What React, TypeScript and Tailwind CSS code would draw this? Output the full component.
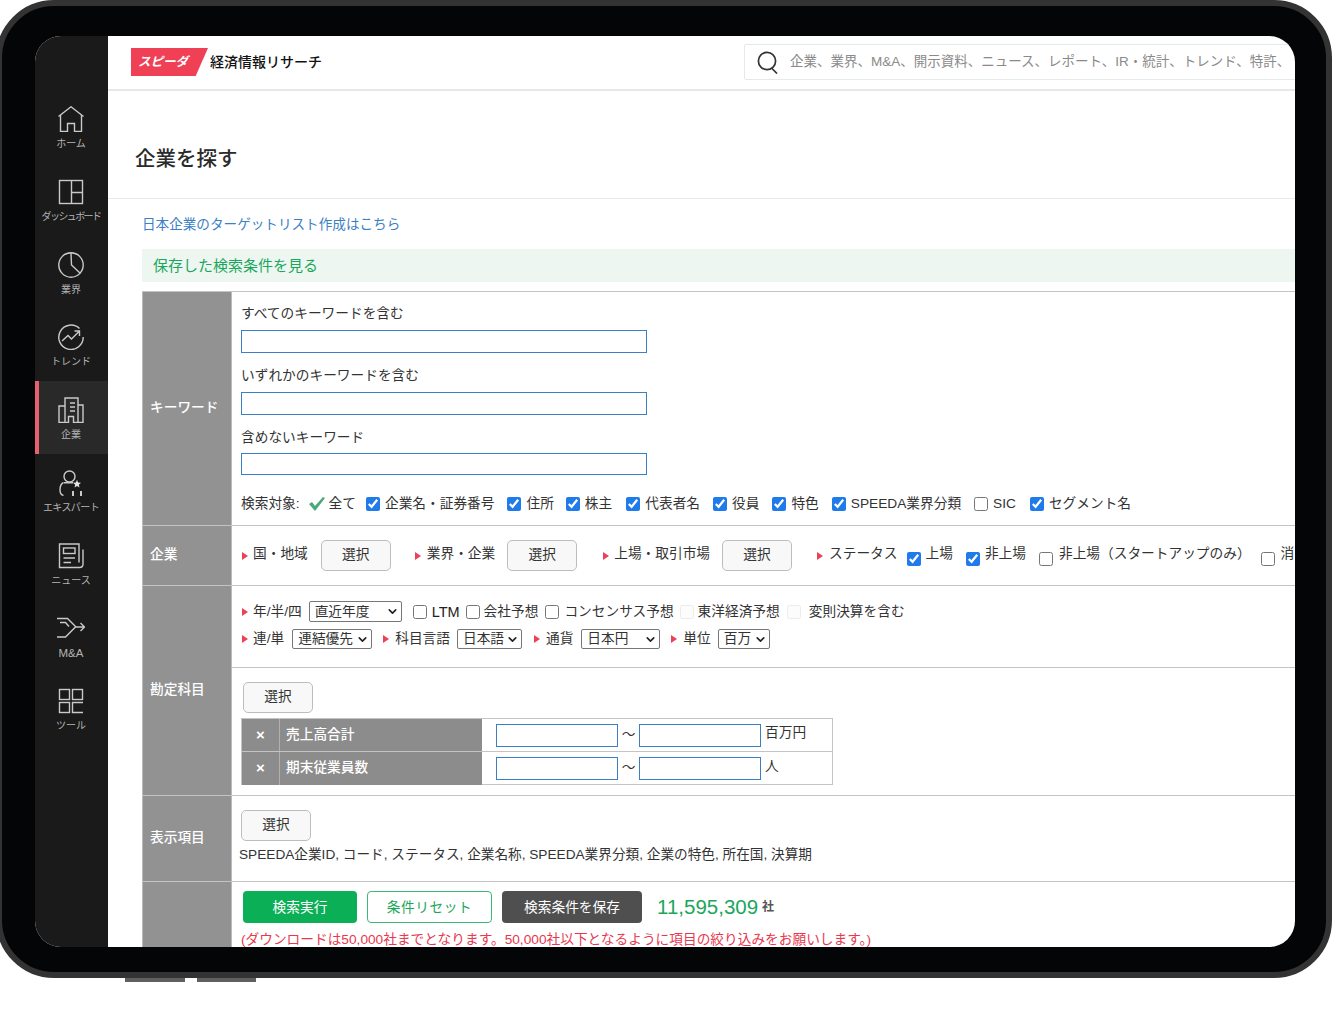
import React from 'react';
import { ChevronDown } from 'lucide-react';

function NavIcon({ name }: { name: string }) {
  const p = { fill: 'none', stroke: '#c9c9c9', strokeWidth: 1.4 };
  if (name === 'home') return (
    <svg width="26" height="26" viewBox="0 0 26 26" {...p}>
      <path d="M0.5 10.5 L13 0.8 L25.5 10.5" />
      <path d="M2.5 9 V25.5 H9.5 V17.5 H16.5 V25.5 H23.5 V9" />
    </svg>
  );
  if (name === 'dash') return (
    <svg width="26" height="26" viewBox="0 0 26 26" {...p}>
      <rect x="1.5" y="1.5" width="23" height="23" />
      <path d="M13.5 1.5 V24.5 M13.5 13.5 H24.5" />
    </svg>
  );
  if (name === 'pie') return (
    <svg width="26" height="26" viewBox="0 0 26 26" {...p}>
      <circle cx="13" cy="13" r="12.2" />
      <path d="M13 1 L13.5 13 L22.5 21.5" />
    </svg>
  );
  if (name === 'trend') return (
    <svg width="26" height="26" viewBox="0 0 26 26" {...p}>
      <path d="M21.5 4.5 A12.2 12.2 0 1 0 25.2 13" />
      <path d="M4 17 L10 11.5 L13.5 15 L21 7.5 M16.5 7 H21.5 V12" />
    </svg>
  );
  if (name === 'building') return (
    <svg width="26" height="26" viewBox="0 0 26 26" {...p}>
      <path d="M7 25.5 V1 H20 V25.5" />
      <path d="M7 9 H1 V25.5 H10.5 V19.5 H15.5 V25.5 H25 V8 H20" />
      <path d="M12 6 H17 M12 10 H17 M12 14 H17" />
    </svg>
  );
  if (name === 'expert') return (
    <svg width="26" height="26" viewBox="0 0 26 26" {...p}>
      <circle cx="11.5" cy="6.5" r="5.5" />
      <path d="M5.5 12.5 C2 14 2 17 2 20 C2 22.5 3.5 25 5.5 25.5 M6 12.8 H15" />
      <path d="M15 26 V21 M23 26 V21" strokeWidth="2" />
      <polygon points="19,9.8 20.1,12.6 23,12.8 20.8,14.7 21.5,17.5 19,16 16.5,17.5 17.2,14.7 15,12.8 17.9,12.6" fill="#e6e6e6" stroke="none" />
    </svg>
  );
  if (name === 'news') return (
    <svg width="26" height="26" viewBox="0 0 26 26" {...p}>
      <path d="M21 19.5 V1 H1.5 V24.5 H21.5 C23.5 24.5 25 23 25 21 V6.5" />
      <rect x="5.5" y="5" width="11.5" height="5.5" />
      <path d="M5.5 15 H17 M5.5 19.5 H13" />
    </svg>
  );
  if (name === 'ma') return (
    <svg width="28" height="22" viewBox="0 0 28 22" {...p}>
      <path d="M0 1.5 H10.5 L19 10 M3 5.5 H8.5 L12 9.5" />
      <path d="M0 20 H8.5 L18.5 10 H27.5 M23.5 6 L27.5 10 L23.5 14" />
    </svg>
  );
  return (
    <svg width="26" height="26" viewBox="0 0 26 26" {...p}>
      <rect x="1.5" y="1.5" width="10" height="10" />
      <rect x="14.5" y="1.5" width="10" height="10" />
      <rect x="1.5" y="14.5" width="10" height="10" />
      <path d="M25 14.5 H14.5 V24.5 H25" />
    </svg>
  );
}

const navItems = [
  { icon: 'home', label: 'ホーム' },
  { icon: 'dash', label: 'ダッシュボード' },
  { icon: 'pie', label: '業界' },
  { icon: 'trend', label: 'トレンド' },
  { icon: 'building', label: '企業', active: true },
  { icon: 'expert', label: 'エキスパート' },
  { icon: 'news', label: 'ニュース' },
  { icon: 'ma', label: 'M&A' },
  { icon: 'tools', label: 'ツール' },
];

function Tri({ className = '' }: { className?: string }) {
  return (
    <svg width="6" height="8" viewBox="0 0 6 8" className={`shrink-0 ${className}`}>
      <polygon points="0,0 6,4 0,8" fill="#ee4056" />
    </svg>
  );
}

function Check({ on = false, off = false, className = '' }: { on?: boolean; off?: boolean; className?: string }) {
  return (
    <input
      type="checkbox"
      defaultChecked={on}
      disabled={off}
      className={`w-[14px] h-[14px] m-0 shrink-0 accent-[#1f7aeb] ${off ? 'opacity-40' : ''} ${className}`}
    />
  );
}

function PickButton({ className = '' }: { className?: string }) {
  return (
    <button className={`w-[70px] h-[31px] shrink-0 rounded-[5px] border border-[#bdbdbd] bg-[#f8f8f8] text-[13.7px] text-[#333] ${className}`}>
      選択
    </button>
  );
}

function Sel({ value, width, height = 'h-[20px]', className = '' }: { value: string; width: string; height?: string; className?: string }) {
  return (
    <div className={`relative shrink-0 ${width} ${height} ${className}`}>
      <select className="appearance-none w-full h-full border border-[#777] rounded-[2px] bg-white pl-[5px] text-[13.7px] leading-none text-[#333]">
        <option>{value}</option>
      </select>
      <ChevronDown size={13} strokeWidth={3} className="absolute right-[3px] top-[4px] text-[#222] pointer-events-none" />
    </div>
  );
}

function KeywordField({ label, labelClass, inputClass }: { label: string; labelClass: string; inputClass: string }) {
  return (
    <>
      <div className={`leading-[20px] ${labelClass}`}>{label}</div>
      <input className={`block w-[406px] border border-[#3b7fc4] bg-white ${inputClass}`} />
    </>
  );
}

function Row({ label, className, children }: { label?: string; className: string; children: React.ReactNode }) {
  return (
    <div className={`flex border-b border-[#c4c4c4] ${className}`}>
      <div className="w-[90px] shrink-0 flex items-center pl-[7px] bg-[#929292] border-l border-[#bbbbbb] border-r text-white font-medium">
        {label}
      </div>
      <div className="flex-1 min-w-0 pl-[9px]">{children}</div>
    </div>
  );
}

function Target({ label, on = true, className = '' }: { label: string; on?: boolean; className?: string }) {
  return (
    <>
      <Check on={on} className={className} />
      <span className="ml-[5px]">{label}</span>
    </>
  );
}

function RangeRow({ label, unit, last = false }: { label: string; unit: string; last?: boolean }) {
  return (
    <div className={`flex h-[33px] ${last ? '' : 'border-b border-[#c4c4c4]'}`}>
      <div className="w-[38px] shrink-0 flex items-center justify-center bg-[#8c8c8c] border-r border-[#b0b0b0] text-[15px] text-white font-bold">×</div>
      <div className="w-[202px] shrink-0 flex items-center pl-[6px] bg-[#8c8c8c] text-white font-medium">{label}</div>
      <div className="flex-1 flex items-center pl-[14px]">
        <input className="w-[122px] h-[23px] border border-[#3b7fc4] bg-white" />
        <span className="w-[21px] text-center">〜</span>
        <input className="w-[122px] h-[23px] border border-[#3b7fc4] bg-white" />
        <span className="ml-[4px] -mt-[3px]">{unit}</span>
      </div>
    </div>
  );
}

export default function App() {
  return (
    <div className="w-[1340px] h-[1028px] overflow-hidden bg-white text-[13.7px] text-[#333] [font-family:'Liberation_Sans','Noto_Sans_CJK_JP',sans-serif]">
      <div className="-ml-[4px] w-[1336px] h-[978px] rounded-[58px] border-[6px] border-[#333333] bg-[#040507] pt-[30px] pl-[33px] pr-[31px] pb-[25px]">
        <div className="flex h-full rounded-[26px] overflow-hidden bg-white">
          {/* sidebar */}
          <div className="w-[73px] shrink-0 bg-[#1a1a1a] pt-[54px]">
            {navItems.map(item => (
              <div
                key={item.label}
                className={`h-[72.75px] flex flex-col items-center pt-[16px] ${item.active ? 'bg-[#292929] border-l-[4px] border-[#e8606f] pr-[5px]' : 'pr-[1px]'}`}
              >
                <div className="h-[26px] flex items-center justify-center"><NavIcon name={item.icon} /></div>
                <div className={`mt-[6px] leading-[12px] whitespace-nowrap text-[#b4b4b4] ${item.label === 'M&A' ? 'text-[11.5px]' : 'text-[10px]'} ${item.label === 'ダッシュボード' ? 'tracking-[-1.6px]' : item.label === 'エキスパート' ? 'tracking-[-0.6px]' : ''}`}>
                  {item.label}
                </div>
              </div>
            ))}
          </div>

          {/* main */}
          <div className="flex-1 min-w-0 overflow-hidden">
            <div className="h-[55px] flex items-center border-b-2 border-[#e6e8e8]">
              <div className="ml-[23px] -mt-[1px] w-[77px] h-[28px] shrink-0 flex items-center pl-[7px] bg-[#ef4056] [clip-path:polygon(0_0,100%_0,84%_100%,0_100%)] text-white text-[12.5px] font-bold italic">
                スピーダ
              </div>
              <div className="ml-[2px] shrink-0 text-[14px] font-medium text-[#111] whitespace-nowrap">経済情報リサーチ</div>
              <div className="ml-[422px] -mt-[1px] w-[560px] h-[36px] shrink-0 flex items-center border border-[#e4e9e9] rounded-[2px] pl-[12px] overflow-hidden">
                <svg width="23" height="23" viewBox="0 0 23 23" fill="none" stroke="#333" strokeWidth="1.7" className="shrink-0">
                  <circle cx="10" cy="10" r="8.6" />
                  <path d="M14.5 17 L20 22.5" />
                </svg>
                <span className="ml-[10px] pt-[1px] text-[13.5px] text-[#8a8a8a] whitespace-nowrap">企業、業界、M&amp;A、開示資料、ニュース、レポート、IR・統計、トレンド、特許、</span>
              </div>
            </div>

            <div className="h-[108px] flex items-center pl-[27px] pt-[30px] border-b border-[#e8eaea] text-[20.5px] font-medium text-[#2b2b2b]">
              企業を探す
            </div>

            <div className="pl-[34px]">
              <div className="h-[50px] pt-[2px] flex items-center text-[13.6px] text-[#3b7fc4] whitespace-nowrap">日本企業のターゲットリスト作成はこちら</div>
              <div className="h-[33px] pt-[1px] flex items-center pl-[11px] bg-[#eef6f2] text-[15px] text-[#1aa75c]">保存した検索条件を見る</div>

              <div className="mt-[9px] border-t border-[#c4c4c4]">
                <Row label="キーワード" className="h-[234px]">
                  <KeywordField label="すべてのキーワードを含む" labelClass="mt-[12px]" inputClass="mt-[6px] h-[23px]" />
                  <KeywordField label="いずれかのキーワードを含む" labelClass="mt-[13px]" inputClass="mt-[6px] h-[23px]" />
                  <KeywordField label="含めないキーワード" labelClass="mt-[13px]" inputClass="mt-[5px] h-[22px]" />
                  <div className="mt-[19px] h-[20px] flex items-center whitespace-nowrap">
                    <span>検索対象:</span>
                    <svg width="18" height="16" viewBox="0 0 18 16" className="ml-[8px]">
                      <path d="M1 8 L4 6 L7 10 L15 1 L17 2 L7 15 Z" fill="#4aa879" />
                    </svg>
                    <span className="ml-[3px]">全て</span>
                    <Target label="企業名・証券番号" on className="ml-[10px]" />
                    <Target label="住所" className="ml-[13px]" />
                    <Target label="株主" className="ml-[12px]" />
                    <Target label="代表者名" className="ml-[14px]" />
                    <Target label="役員" className="ml-[13px]" />
                    <Target label="特色" className="ml-[13px]" />
                    <Target label="SPEEDA業界分類" className="ml-[13px]" />
                    <Target label="SIC" on={false} className="ml-[13px]" />
                    <Target label="セグメント名" className="ml-[14px]" />
                  </div>
                </Row>

                <Row label="企業" className="h-[60px]">
                  <div className="h-full flex items-center whitespace-nowrap">
                    <Tri className="ml-[1px]" />
                    <span className="ml-[5px] -mt-[3px]">国・地域</span>
                    <PickButton className="ml-[13px]" />
                    <Tri className="ml-[24px]" />
                    <span className="ml-[6px] -mt-[3px]">業界・企業</span>
                    <PickButton className="ml-[12px]" />
                    <Tri className="ml-[26px]" />
                    <span className="ml-[5px] -mt-[3px]">上場・取引市場</span>
                    <PickButton className="ml-[12px]" />
                    <Tri className="ml-[25px]" />
                    <span className="ml-[6px] -mt-[3px]">ステータス</span>
                    <Check on className="ml-[9px] mt-[6px]" />
                    <span className="ml-[5px] -mt-[2px]">上場</span>
                    <Check on className="ml-[13px] mt-[6px]" />
                    <span className="ml-[5px] -mt-[2px]">非上場</span>
                    <Check className="ml-[13px] mt-[6px]" />
                    <span className="ml-[6px] -mt-[2px]">非上場（スタートアップのみ）</span>
                    <Check className="ml-[10px] mt-[6px]" />
                    <span className="ml-[6px] -mt-[2px]">消</span>
                  </div>
                </Row>

                <Row label="勘定科目" className="h-[210px]">
                  <div className="-ml-[9px] h-[82px] pl-[10px] border-b border-[#c4c4c4]">
                    <div className="pt-[15px] h-[36px] flex items-center whitespace-nowrap">
                      <Tri />
                      <span className="ml-[5px] mt-[2px]">年/半/四</span>
                      <Sel value="直近年度" width="w-[93px]" height="h-[21px]" className="ml-[7px]" />
                      <Check className="ml-[11px] mt-[1px]" />
                      <span className="ml-[5px] mt-[2px] text-[14.5px] text-[#222]">LTM</span>
                      <Check className="ml-[6px] mt-[1px]" />
                      <span className="ml-[4px] mt-[2px]">会社予想</span>
                      <Check className="ml-[7px] mt-[1px]" />
                      <span className="ml-[5px] mt-[2px]">コンセンサス予想</span>
                      <Check off className="ml-[6px] mt-[1px]" />
                      <span className="ml-[4px] mt-[2px]">東洋経済予想</span>
                      <Check off className="ml-[7px] mt-[1px]" />
                      <span className="ml-[8px] mt-[2px]">変則決算を含む</span>
                    </div>
                    <div className="h-[21px] mt-[6px] flex items-center whitespace-nowrap">
                      <Tri />
                      <span className="ml-[5px] mt-[2px]">連/単</span>
                      <Sel value="連結優先" width="w-[80px]" className="ml-[8px]" />
                      <Tri className="ml-[11px]" />
                      <span className="ml-[6px] mt-[2px]">科目言語</span>
                      <Sel value="日本語" width="w-[65px]" className="ml-[7px]" />
                      <Tri className="ml-[12px]" />
                      <span className="ml-[6px] mt-[2px]">通貨</span>
                      <Sel value="日本円" width="w-[79px]" className="ml-[8px]" />
                      <Tri className="ml-[11px]" />
                      <span className="ml-[6px] mt-[2px]">単位</span>
                      <Sel value="百万" width="w-[52px]" className="ml-[7px]" />
                    </div>
                  </div>
                  <PickButton className="ml-[2px] mt-[14px] block" />
                  <div className="mt-[5px] w-[592px] h-[67px] border border-[#c4c4c4]">
                    <RangeRow label="売上高合計" unit="百万円" />
                    <RangeRow label="期末従業員数" unit="人" last />
                  </div>
                </Row>

                <Row label="表示項目" className="h-[86px]">
                  <PickButton className="mt-[14px] block" />
                  <div className="mt-[4px] -ml-[2px] leading-[20px] text-[13.65px] whitespace-nowrap">
                    SPEEDA企業ID, コード, ステータス, 企業名称, SPEEDA業界分類, 企業の特色, 所在国, 決算期
                  </div>
                </Row>

                <Row className="h-[80px]">
                  <div className="pt-[9px] flex items-center whitespace-nowrap">
                    <button className="ml-[2px] w-[114px] h-[32px] pt-[2px] rounded-[4px] bg-[#0baf56] text-white">検索実行</button>
                    <button className="ml-[10px] w-[125px] h-[32px] pt-[2px] rounded-[4px] border border-[#3cb878] bg-white text-[#1aa75c] tracking-[0.6px]">条件リセット</button>
                    <button className="ml-[10px] w-[140px] h-[32px] pt-[2px] rounded-[4px] bg-[#4f4f4f] text-white">検索条件を保存</button>
                    <span className="ml-[15px] text-[20.5px] text-[#1aa75c]">11,595,309</span>
                    <span className="ml-[4px] text-[12px] font-bold text-[#555]">社</span>
                  </div>
                  <div className="mt-[7px] leading-[20px] text-[#e8384f] whitespace-nowrap">
                    (ダウンロードは50,000社までとなります。50,000社以下となるように項目の絞り込みをお願いします。)
                  </div>
                </Row>
              </div>
            </div>
          </div>
        </div>
      </div>
      <div className="flex ml-[125px] gap-[12px]">
        <div className="w-[60px] h-[4px] bg-[#5f5f5f]" />
        <div className="w-[59px] h-[4px] bg-[#5f5f5f]" />
      </div>
    </div>
  );
}
